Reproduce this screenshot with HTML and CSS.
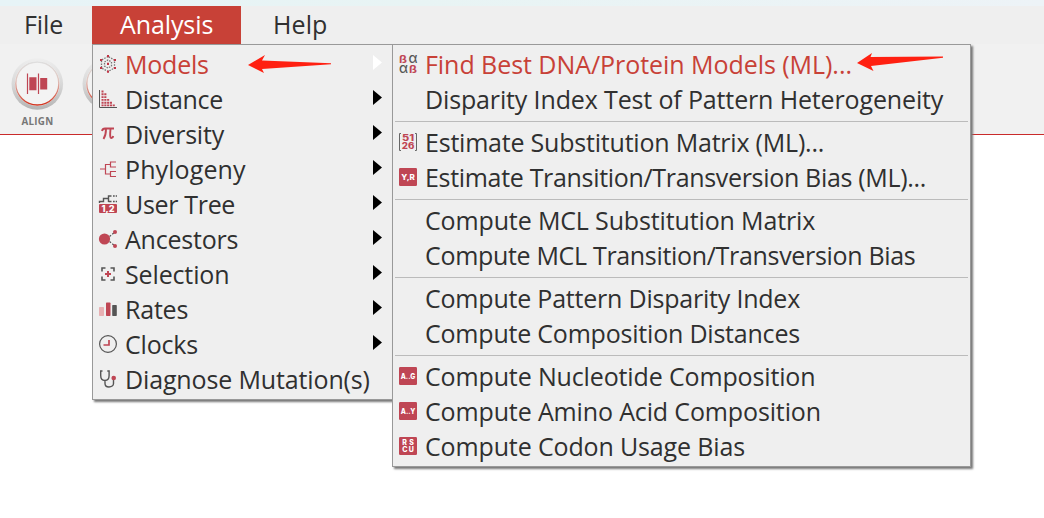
FILE: index.html
```
<!DOCTYPE html>
<html lang="en">
<head>
<meta charset="utf-8">
<title>Analysis</title>
<link rel="stylesheet" href="styles.css">
</head>
<body>
<div class="strip"></div>
<nav class="menubar">
  <span class="tab file">File</span>
  <span class="tab active">Analysis</span>
  <span class="tab help">Help</span>
</nav>
<div class="toolbar">
  <div class="tool">
    <div class="ring"><svg width="54" height="54" viewBox="0 0 54 54">
      <defs>
        <linearGradient id="rim" x1="0" y1="0" x2="0" y2="1"><stop offset="0" stop-color="#eeeeee"/><stop offset=".5" stop-color="#d8d8d8"/><stop offset="1" stop-color="#b4b4b4"/></linearGradient>
        <linearGradient id="glow" x1="0" y1="0" x2="0" y2="1"><stop offset="0" stop-color="#dedede"/><stop offset=".4" stop-color="#dfc8c2"/><stop offset="1" stop-color="#d2341f"/></linearGradient>
      </defs>
      <circle cx="27.3" cy="27" r="25.8" fill="url(#rim)"/>
      <circle cx="27.3" cy="26.5" r="22.4" fill="#f8f8f8"/>
      <circle cx="27.3" cy="26.5" r="21.5" fill="#f3f3f3" stroke="url(#glow)" stroke-width="1.3"/>
      <path d="M17.5 16.500v20.500M28.500 16.500v20.500" stroke="#bf4654" stroke-width="1.200"/>
      <path d="M19.300 20.200h7.200v13h-7.200zM30.200 21h7v11.500h-7z" fill="#bf4654"/>
    </svg></div>
    <span class="caption">ALIGN</span>
  </div>
  <div class="ring"><svg width="54" height="54" viewBox="0 0 54 54">
    <circle cx="27.300" cy="27" r="25.800" fill="url(#rim)"/><circle cx="27.300" cy="26.500" r="22.400" fill="#f8f8f8"/><circle cx="27.300" cy="26.500" r="21.500" fill="#f3f3f3" stroke="url(#glow)" stroke-width="1.300"/>
  </svg></div>
</div>

<div class="menu main">
  <div class="row on"><svg class="ic" viewBox="0 0 18 18"><path d="M9 1.500L2.500 5v8L9 16.500l6.500-3.500V5zM5.500 7L9 5l3.500 2v4L9 13l-3.500-2z" fill="none" stroke="#777" stroke-width="1.300" stroke-dasharray="1.500 1.200"/><path d="M8 0h2v2.200H8zM8 7.800h2V10H8zM8 15.500h2v2.300H8zM1 4h2.200v2H1zM14.800 4H17v2h-2.200zM1 12h2.200v2H1zM14.800 12H17v2h-2.200z" fill="#c03445"/></svg><span class="t m">Models</span><i class="arr"></i></div>
  <div class="row"><svg class="ic" viewBox="0 0 18 18"><path d="M.5 0v17.500H18" fill="none" stroke="#555" stroke-width="1"/><path d="M2.500 1.500h2M2.500 4.300h5M2.500 7.100h5M2.500 9.900h8M2.500 12.700h11M2.500 15.400h14" stroke="#bf4654" stroke-width="1.900" stroke-dasharray="2.100 .7"/></svg><span class="t l">Distance</span><i class="arr"></i></div>
  <div class="row"><svg class="ic" viewBox="0 0 18 18"><path d="M3 6C3.500 3.700 4.500 3.500 6 3.500h9M7 4c0 4-.5 7-2.500 10M11.500 4c-.5 5-.7 9 1 9 1 0 1.500-.7 1.700-2" fill="none" stroke="#bf4654" stroke-width="1.900"/></svg><span class="t m">Diversity</span><i class="arr"></i></div>
  <div class="row"><svg class="ic" viewBox="0 0 18 18"><path d="M1 9h5.500M17 2h-5.500v5H17M11.500 4.500H6.500V14h5M17 11.500h-5.500v5H17" fill="none" stroke="#bf4654" stroke-width="1.200"/></svg><span class="t wide">Phylogeny</span><i class="arr"></i></div>
  <div class="row"><svg class="ic" viewBox="0 0 18 18"><path d="M.5 8V6.500h4v-3h5M9.500 7V1h3M9.500 6.500h3" fill="none" stroke="#555" stroke-width="1.400"/><path d="M14 1h4M14 6.500h4" stroke="#555" stroke-width="1.400" stroke-dasharray="1.700 1"/><rect y="9" width="18" height="9" rx="1" fill="#bf4654"/><text x="9" y="16.500" class="glyph" font-size="8.500" textLength="13" lengthAdjust="spacingAndGlyphs">1,2</text></svg><span class="t l">User Tree</span><i class="arr"></i></div>
  <div class="row"><svg class="ic" viewBox="0 0 18 18"><path d="M10.500 6.500l5-4M10.500 11.500l5 4" stroke="#555" stroke-width="1.200" stroke-dasharray="2 1.500"/><circle cx="5.500" cy="9" r="5.600" fill="#bf4654"/><circle cx="16" cy="2" r="2" fill="#bf4654"/><circle cx="16" cy="16" r="2" fill="#bf4654"/></svg><span class="t m">Ancestors</span><i class="arr"></i></div>
  <div class="row"><svg class="ic" viewBox="0 0 18 18"><path d="M3 6.500V3h3.500M11.500 3H15v3.500M15 11.500V15h-3.500M6.500 15H3v-3.500" fill="none" stroke="#555" stroke-width="1.600"/><path d="M9 6v6M6 9h6" stroke="#bf4654" stroke-width="2"/></svg><span class="t">Selection</span><i class="arr"></i></div>
  <div class="row"><svg class="ic" viewBox="0 0 18 18"><rect y="7" width="5" height="9" rx=".7" fill="#e8b0b3"/><rect x="7" y="2.500" width="4.500" height="13.500" rx=".7" fill="#bf4654"/><rect x="13.200" y="5" width="4.600" height="11" rx=".7" fill="#555"/></svg><span class="t m">Rates</span><i class="arr"></i></div>
  <div class="row"><svg class="ic" viewBox="0 0 18 18"><circle cx="9" cy="9" r="8.400" fill="none" stroke="#555" stroke-width="1.200"/><path d="M10 5v5H4.500" fill="none" stroke="#bf4654" stroke-width="1.700"/></svg><span class="t m">Clocks</span><i class="arr"></i></div>
  <div class="row"><svg class="ic" viewBox="0 0 18 18"><path d="M3.500 1H1.700v4.500c0 3 1 5 4.200 5s4.200-2 4.200-5V1H8.300M6 10.500v3C6 15.500 7.500 17 10 17s4.500-1.500 4.500-3.500V9.500" fill="none" stroke="#555" stroke-width="1.400"/><circle cx="14.700" cy="8" r="2.300" fill="#bf4654"/></svg><span class="t">Diagnose Mutation(s)</span></div>
</div>

<div class="menu sub">
  <div class="row on"><svg class="ic" viewBox="0 0 18 18"><g class="greek"><text x="0" y="8" class="eszett" textLength="8" lengthAdjust="spacingAndGlyphs">ß</text><text x="9.500" y="8" class="dark" textLength="9" lengthAdjust="spacingAndGlyphs">α</text><text x="0" y="18" class="dark" textLength="9" lengthAdjust="spacingAndGlyphs">α</text><text x="10" y="18" class="eszett" textLength="8" lengthAdjust="spacingAndGlyphs">ß</text></g></svg><span class="t s">Find Best DNA/Protein Models (ML)...</span></div>
  <div class="row"><span class="ic"></span><span class="t">Disparity Index Test of Pattern Heterogeneity</span></div>
  <hr>
  <div class="row"><svg class="ic" viewBox="0 0 18 18"><path d="M2 .5H.5v17H2M16 .5h1.500v17H16" fill="none" stroke="#666"/><text x="9" y="8.300" class="glyph red" font-size="8.300" textLength="12" lengthAdjust="spacingAndGlyphs">51</text><text x="9" y="15.800" class="glyph red" font-size="8.300" textLength="12.500" lengthAdjust="spacingAndGlyphs">26</text></svg><span class="t m">Estimate Substitution Matrix (ML)...</span></div>
  <div class="row"><svg class="ic" viewBox="0 0 18 18"><rect width="18" height="18" rx="1.200" fill="#bf4654"/><text x="9" y="12" class="glyph" font-size="7.500" textLength="13.500" lengthAdjust="spacingAndGlyphs">Y,R</text></svg><span class="t l">Estimate Transition/Transversion Bias (ML)...</span></div>
  <hr>
  <div class="row"><span class="ic"></span><span class="t">Compute MCL Substitution Matrix</span></div>
  <div class="row"><span class="ic"></span><span class="t l">Compute MCL Transition/Transversion Bias</span></div>
  <hr>
  <div class="row"><span class="ic"></span><span class="t m">Compute Pattern Disparity Index</span></div>
  <div class="row"><span class="ic"></span><span class="t m">Compute Composition Distances</span></div>
  <hr>
  <div class="row"><svg class="ic" viewBox="0 0 18 18"><rect width="18" height="18" rx="1.200" fill="#bf4654"/><text x="9" y="12" class="glyph" font-size="7.500" textLength="14.500" lengthAdjust="spacingAndGlyphs">A..G</text></svg><span class="t">Compute Nucleotide Composition</span></div>
  <div class="row"><svg class="ic" viewBox="0 0 18 18"><rect width="18" height="18" rx="1.200" fill="#bf4654"/><text x="9" y="12" class="glyph" font-size="7.500" textLength="14.500" lengthAdjust="spacingAndGlyphs">A..Y</text></svg><span class="t">Compute Amino Acid Composition</span></div>
  <div class="row"><svg class="ic" viewBox="0 0 18 18"><rect width="18" height="18" rx="1.200" fill="#bf4654"/><text x="9" y="8.200" class="glyph" font-size="7" textLength="11.500">RS</text><text x="9" y="15" class="glyph" font-size="7" textLength="11.500">CU</text></svg><span class="t">Compute Codon Usage Bias</span></div>
</div>

<svg class="pointer p1" viewBox="0 0 84 20"><path d="M0 10L17 0l-3 5.500L83 8.200v1L14 14l2 4z" fill="#ff2011"/></svg>
<svg class="pointer p2" viewBox="0 0 88 20"><path d="M0 10L15 0l-1.500 4L86 3.500v1.200L14 13l2.500 5z" fill="#ff2011"/></svg>
</body>
</html>
```
FILE: styles.css
```
* { box-sizing: border-box; }
body {
  margin: 0;
  width: 1044px;
  height: 518px;
  overflow: hidden;
  position: relative;
  background: #fff;
  color: #303030;
  font-family: "Open Sans", "Noto Sans", sans-serif;
  font-size: 25px;
}
.strip { height: 6px; background: linear-gradient(90deg, #e7f4f7, #e8f4f4 40%, #edf3f7); }
.menubar { display: flex; height: 38px; background: #efefef; line-height: 37px; }
.tab { white-space: nowrap; letter-spacing: -.1px; }
.file { width: 92px; padding-left: 24px; }
.active { width: 149px; padding-left: 28px; background: #c84137; color: #fff; }
.help { padding-left: 32px; letter-spacing: .1px; }
.toolbar {
  display: flex;
  gap: 17px;
  height: 91px;
  padding: 13px 0 0 10px;
  background: #f1f1f1;
  border-bottom: 1px solid #c92b2b;
}
.tool { width: 54px; }
.ring, .ring svg { display: block; height: 54px; width: 54px; flex: none; }
.caption { display: block; text-align: center; font-size: 9.800px; line-height: 21px; font-weight: 700; color: #777; letter-spacing: .3px; padding-left: 1px; }
.menu {
  position: absolute;
  top: 44px;
  padding: 3px 2px;
  background: #efefef;
  border: 1px solid #999;
  box-shadow: 2px 2px 2px #777;
}
.main { left: 92px; width: 301px; height: 356px; }
.sub { left: 392px; width: 579px; height: 423px; }
.row { display: flex; align-items: flex-start; height: 35px; padding-left: 4px; }
.ic { flex: none; width: 18px; height: 18px; margin: 7px 8px 0 0; overflow: visible; }
.t { flex: 1; white-space: nowrap; height: 35px; line-height: 33px; letter-spacing: -.14px; }
.t.wide { letter-spacing: .1px; }
.t.s { letter-spacing: -.05px; }
.t.m { letter-spacing: -.21px; }
.t.l { letter-spacing: -.32px; }
.on { color: #c84137; }
.arr { width: 9px; height: 15px; margin: 7px 8px 0 0; background: #000; clip-path: polygon(0 0, 100% 50%, 0 100%); }
.on .arr { background: #fff; }
hr { height: 1px; margin: 3px 0 4px; border: 0; background: #bbb; }
.glyph { fill: #fff; font-family: Inter, sans-serif; font-weight: 800; text-anchor: middle; }
.red { fill: #bf4654; }
.greek { font-family: Inter, sans-serif; font-size: 13px; font-weight: 500; fill: #bf4654; }
.eszett { font-size: 10px; font-weight: 700; }
.dark { fill: #555; }
.pointer { position: absolute; overflow: visible; }
.p1 { left: 248px; top: 55px; width: 84px; height: 20px; }
.p2 { left: 857px; top: 53px; width: 88px; height: 20px; }
```
